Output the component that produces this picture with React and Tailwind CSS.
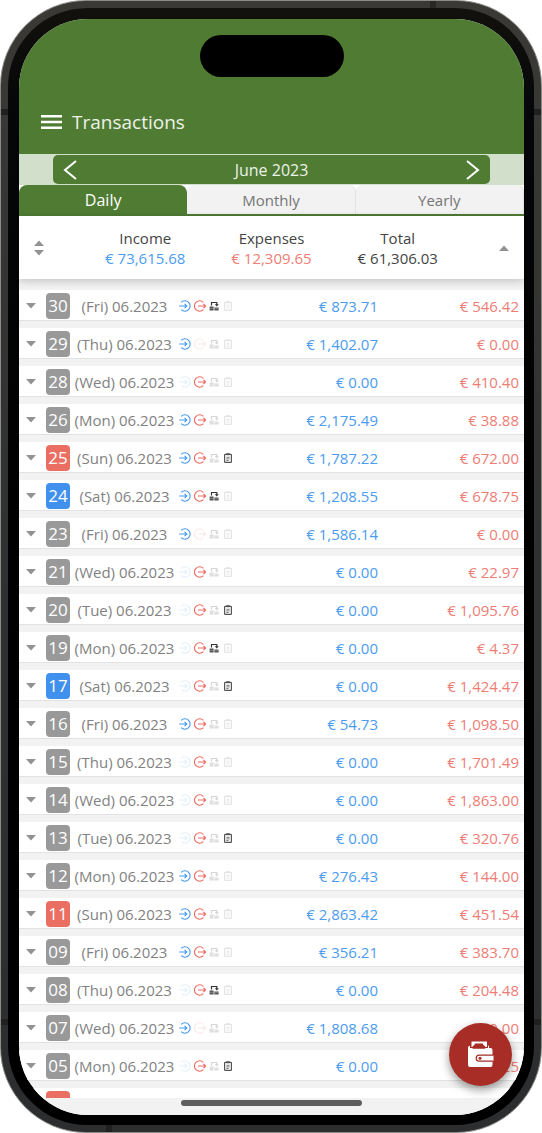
import { useState } from "react";

const days = [
  { day: "30", week: "Fri", income: "873.71", expense: "546.42", transfer: true },
  { day: "29", week: "Thu", income: "1,402.07", expense: "0.00" },
  { day: "28", week: "Wed", income: "0.00", expense: "410.40" },
  { day: "26", week: "Mon", income: "2,175.49", expense: "38.88" },
  { day: "25", week: "Sun", income: "1,787.22", expense: "672.00", note: true },
  { day: "24", week: "Sat", income: "1,208.55", expense: "678.75", transfer: true },
  { day: "23", week: "Fri", income: "1,586.14", expense: "0.00" },
  { day: "21", week: "Wed", income: "0.00", expense: "22.97" },
  { day: "20", week: "Tue", income: "0.00", expense: "1,095.76", note: true },
  { day: "19", week: "Mon", income: "0.00", expense: "4.37", transfer: true },
  { day: "17", week: "Sat", income: "0.00", expense: "1,424.47", note: true },
  { day: "16", week: "Fri", income: "54.73", expense: "1,098.50" },
  { day: "15", week: "Thu", income: "0.00", expense: "1,701.49" },
  { day: "14", week: "Wed", income: "0.00", expense: "1,863.00" },
  { day: "13", week: "Tue", income: "0.00", expense: "320.76", note: true },
  { day: "12", week: "Mon", income: "276.43", expense: "144.00" },
  { day: "11", week: "Sun", income: "2,863.42", expense: "451.54" },
  { day: "09", week: "Fri", income: "356.21", expense: "383.70" },
  { day: "08", week: "Thu", income: "0.00", expense: "204.48", transfer: true },
  { day: "07", week: "Wed", income: "1,808.68", expense: "0.00" },
  { day: "05", week: "Mon", income: "0.00", expense: "38.25", note: true },
  { day: "04", week: "Sun" },
];

const tabs = ["Daily", "Monthly", "Yearly"];

const badgeColors = {
  Sun: "bg-[#eb6e62]",
  Sat: "bg-[#4090ee]",
};

const Caret = ({ up }) => (
  <svg viewBox="0 0 10 6" className="h-[6px] w-[10px] fill-[#929292]">
    {up ? <path d="M0 6L5 0.5L10 6Z" /> : <path d="M0 0L5 5.5L10 0Z" />}
  </svg>
);

const IncomeIcon = ({ active }) => (
  <svg viewBox="0 0 12 12" fill="none" stroke="#4597f0" className={active ? "size-3" : "size-3 opacity-15"}>
    <path d="M2.2 2.4A5.2 5.2 0 1 1 2.2 9.6" strokeWidth="1.1" />
    <path d="M0.2 6H7.6M5.6 3.8L7.8 6L5.6 8.2" strokeWidth="1.1" />
  </svg>
);

const ExpenseIcon = ({ active }) => (
  <svg viewBox="0 0 12 12" fill="none" stroke="#ee6a60" className={active ? "size-3" : "size-3 opacity-15"}>
    <path d="M9.4 2.4A5.2 5.2 0 1 0 9.4 9.6" strokeWidth="1.1" />
    <path d="M4 6H11.4M9.4 3.8L11.6 6L9.4 8.2" strokeWidth="1.1" />
  </svg>
);

const TransferIcon = ({ active }) => (
  <svg viewBox="0 0 10 10" fill="none" className={active ? "size-[10px]" : "size-[10px] opacity-20"}>
    <path d="M2.5 4.5V1.5H7.8V4" stroke="#333" strokeWidth="1.2" />
    <path d="M5.8 3.2H9.8L7.8 5.4Z" fill="#333" />
    <path d="M0.6 5.4H4.6V9.4H0.6ZM5.4 6.4H9.6V9.4H5.4Z" fill="#555" />
    <path d="M0.6 7.4H9.4" stroke="#aaa" strokeWidth="0.5" />
  </svg>
);

const NoteIcon = ({ active }) => (
  <svg viewBox="0 0 8 10" fill="none" className={active ? "h-[10px] w-2" : "h-[10px] w-2 opacity-15"}>
    <rect x="0.6" y="1.3" width="6.8" height="8.1" rx="0.6" stroke="#555" strokeWidth="1.2" />
    <path d="M2.3 0.2H5.7V2.2H2.3Z" fill="#555" />
    <path d="M2.4 4.3H5.6M2.4 5.9H5.6M2.4 7.5H4.6" stroke="#555" strokeWidth="0.8" />
  </svg>
);

const WalletIcon = () => (
  <svg viewBox="0 0 27 27" className="size-[27px]">
    <path d="M4.5 6V0.5H20V6Z" fill="#fff" />
    <path d="M3 4.8V7H21V4.8H22V7H23.5Q25.5 7 25.5 9V24Q25.5 26 23.5 26H3Q1 26 1 24V7Q1 4.8 3 4.8Z" fill="#fff" />
    <path d="M5.5 7.8V5.2Q7.6 5 8 2.6H15.7Q16.1 5 18.2 5.2V7.8Z" fill="#a72d26" />
    <path d="M26.5 14.2H12.2A3 3 0 0 0 12.2 20.2H26.5" fill="#fff" stroke="#a72d26" strokeWidth="1.2" />
    <circle cx="13" cy="17.2" r="1.5" fill="#a72d26" />
  </svg>
);

const DayRow = ({ item }) => {
  const { day, week, income, expense, transfer, note } = item;
  return (
    <li className="flex h-[30px] shrink-0 items-center bg-white pt-px pr-[5px] pl-[7px] shadow-[0_1px_0_#e2e2e2]">
      <button aria-label={`Expand ${day}`} className="flex w-5 shrink-0">
        <Caret />
      </button>
      <span
        className={`flex h-[26px] w-6 shrink-0 items-center justify-center rounded-[4px] text-[17px] leading-6 font-medium text-white ${badgeColors[week] || "bg-[#999]"}`}
      >
        {day}
      </span>
      {income && (
        <>
          <span className="w-[109px] shrink-0 pt-px text-center text-[#828282]">({week}) 06.2023</span>
          <div className="flex w-[58px] shrink-0 items-center gap-[3px]">
            <IncomeIcon active={income !== "0.00"} />
            <ExpenseIcon active={expense !== "0.00"} />
            <TransferIcon active={transfer} />
            <div className="pl-[2px]">
              <NoteIcon active={note} />
            </div>
          </div>
          <span className="flex-1 pt-px text-right text-[#4c9cf0]">€ {income}</span>
          <span className="flex-1 pt-px text-right text-[#ee7d75]">€ {expense}</span>
        </>
      )}
    </li>
  );
};

const App = () => {
  const [activeTab, setActiveTab] = useState("Daily");

  return (
    <div className="relative h-screen min-h-[600px] overflow-hidden rounded-[86px] border border-[#8b8b88] bg-linear-to-b from-[#3a3936] via-[#2f3031] to-[#2c2d2e] p-[7px] font-['Open_Sans',sans-serif] text-[15px] leading-5">
      {/* antenna lines */}
      <div className="absolute top-0 right-[105px] h-2 w-[6px] bg-[#292826]" />
      <div className="absolute inset-x-0 top-[108px] h-[6px] bg-[#202020]" />
      <div className="absolute inset-x-0 bottom-[107px] h-[6px] bg-[#202020]" />
      <div className="absolute bottom-0 left-[105px] h-2 w-[6px] bg-[#202020]" />

      <div className="relative h-full rounded-[79px] bg-linear-to-b from-[#12110d] via-[#050608] via-10% to-black pt-[11px] pr-[10px] pb-[10px] pl-[11px]">
        <div className="relative flex h-full flex-col overflow-hidden rounded-[69px] bg-[#f2f2f2]">
          <header className="flex flex-col bg-[#4f7b33] pt-4 pb-[18px] text-white">
            <div className="h-[42px] w-36 self-center rounded-full bg-black" />
            <div className="mt-[31px] flex items-center gap-[10px] pl-[22px]">
              <button aria-label="Menu">
                <svg viewBox="0 0 21 14" className="h-[14px] w-[21px] fill-white">
                  <path d="M0 0H21V2.5H0ZM0 5.75H21V8.25H0ZM0 11.5H21V14H0Z" />
                </svg>
              </button>
              <h1 className="text-[19px] leading-7 text-[#edf2ea]">Transactions</h1>
            </div>
          </header>

          <div className="bg-[#d2dfcb] px-[34px] py-px">
            <div className="flex h-[29px] items-center justify-between rounded-[5px] bg-[#4f7b33] px-[10px] text-[#edf2ea]">
              <button aria-label="Previous month">
                <svg viewBox="0 0 14 20" className="h-5 w-[14px]" fill="none" stroke="#fff" strokeWidth="2">
                  <path d="M13 1L2 10L13 19" />
                </svg>
              </button>
              <span className="text-[16px]">June 2023</span>
              <button aria-label="Next month">
                <svg viewBox="0 0 14 20" className="h-5 w-[14px]" fill="none" stroke="#fff" strokeWidth="2">
                  <path d="M1 1L12 10L1 19" />
                </svg>
              </button>
            </div>
          </div>

          <nav className="grid h-[31px] shrink-0 grid-cols-3 border-b-2 border-[#4f7b33] bg-white">
            {tabs.map((tab) => (
              <button
                key={tab}
                onClick={() => setActiveTab(tab)}
                className={
                  tab === activeTab
                    ? "rounded-t-[8px] bg-[#4f7b33] text-[16px] font-medium text-white"
                    : "rounded-t-[6px] border-r border-[#e2e2e2] bg-[#f2f2f2] text-[15px] text-[#757575]"
                }
              >
                {tab}
              </button>
            ))}
          </nav>

          <section className="z-10 grid h-[63px] shrink-0 grid-cols-[1fr_2fr_2fr_2fr_1fr] items-center bg-white text-center text-[#444] shadow-[0_2px_8px_rgba(0,0,0,0.2)]">
            <button aria-label="Sort" className="flex flex-col gap-1 pl-[15px]">
              <Caret up />
              <Caret />
            </button>
            <div>
              <div>Income</div>
              <div className="text-[#4c9cf0]">€ 73,615.68</div>
            </div>
            <div>
              <div>Expenses</div>
              <div className="text-[#ee7d75]">€ 12,309.65</div>
            </div>
            <div>
              <div>Total</div>
              <div>€ 61,306.03</div>
            </div>
            <button aria-label="Collapse" className="flex justify-end pr-[15px]">
              <Caret up />
            </button>
          </section>

          <ul className="flex min-h-0 flex-1 flex-col gap-2 overflow-hidden pt-[11px]">
            {days.map((item) => (
              <DayRow key={item.day} item={item} />
            ))}
          </ul>

          <footer className="flex h-[17px] shrink-0 justify-center bg-[#f2f2f2] pt-[2px]">
            <div className="h-[6px] w-[181px] rounded-full bg-[#5d5d5d]" />
          </footer>

          <button
            aria-label="Add transaction"
            className="absolute right-3 bottom-[29px] z-20 flex size-[63px] items-center justify-center rounded-full bg-[#a72d26] shadow-[0_4px_10px_rgba(0,0,0,0.4)]"
          >
            <WalletIcon />
          </button>
        </div>
      </div>
    </div>
  );
};

export default App;
